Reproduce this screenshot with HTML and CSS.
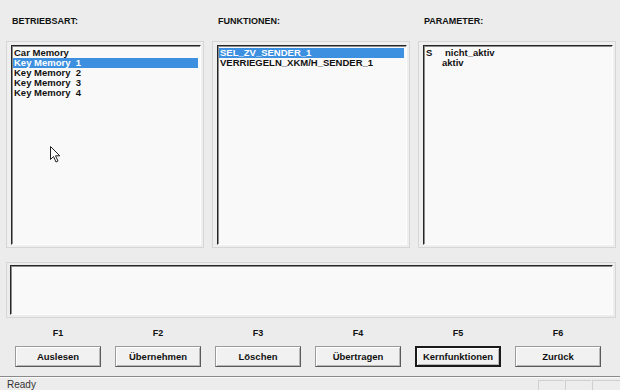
FILE: index.html
```html
<!DOCTYPE html>
<html lang="de">
<head>
    <meta charset="UTF-8">
    <title>Betriebsart</title>
    <link rel="stylesheet" href="styles.css">
</head>
<body>
    <div class="window">
        <div class="columns">
            <div class="column">
                <div class="caption">BETRIEBSART:</div>
                <div class="panel">
                    <ul class="listbox">
                        <li>Car Memory</li>
                        <li class="selected">Key Memory  1</li>
                        <li>Key Memory  2</li>
                        <li>Key Memory  3</li>
                        <li>Key Memory  4</li>
                    </ul>
                </div>
            </div>
            <div class="column">
                <div class="caption">FUNKTIONEN:</div>
                <div class="panel">
                    <ul class="listbox">
                        <li class="selected">SEL_ZV_SENDER_1</li>
                        <li>VERRIEGELN_XKM/H_SENDER_1</li>
                    </ul>
                </div>
            </div>
            <div class="column">
                <div class="caption">PARAMETER:</div>
                <div class="panel">
                    <ul class="listbox params">
                        <li><span class="flag">S</span>nicht_aktiv</li>
                        <li><span class="flag"></span>aktiv</li>
                    </ul>
                </div>
            </div>
        </div>

        <div class="message">
            <div class="message-box"></div>
        </div>

        <div class="keys">
            <div class="key"><span>F1</span><button>Auslesen</button></div>
            <div class="key"><span>F2</span><button>Übernehmen</button></div>
            <div class="key"><span>F3</span><button>Löschen</button></div>
            <div class="key"><span>F4</span><button>Übertragen</button></div>
            <div class="key"><span>F5</span><button class="default">Kernfunktionen</button></div>
            <div class="key"><span>F6</span><button>Zurück</button></div>
        </div>

        <div class="statusbar">
            <div class="status-text">Ready</div>
            <div class="pane"></div>
            <div class="pane"></div>
            <div class="pane"></div>
        </div>

        <!-- Mauszeiger -->
        <svg class="cursor" width="11" height="17" viewBox="0 0 11 17">
            <path d="M0.5 0.5 L0.5 13.5 L3.5 10.5 L6 16 L8 15 L5.5 9.8 L9.8 9.8 Z" fill="#fff" stroke="#222" stroke-width="1"/>
        </svg>
    </div>
</body>
</html>
```

FILE: styles.css
```css
body {
    margin: 0;
    background-color: #ececec;
    font-family: "Liberation Sans", Arial, sans-serif;
    color: #111;
}
.window {
    position: relative;
    width: 620px;
    height: 390px;
    overflow: hidden;
}
.columns {
    display: grid;
    grid-template-columns: 198px 198px 198px;
    column-gap: 8px;
    padding: 16px 0 0 6px;
}
.caption {
    height: 11px;
    line-height: 11px;
    font-size: 9px;
    font-weight: bold;
    padding-left: 6px;
    margin-bottom: 14px;
}
.panel {
    height: 207px;
    box-sizing: border-box;
    border: 1px solid #d6d6d6;
    background-color: #efefef;
    padding: 3px 2px 2px 4px;
}
.listbox {
    list-style: none;
    margin: 0;
    height: 100%;
    box-sizing: border-box;
    padding: 2px 2px 0 1px;
    background-color: #f9f9f9;
    border-top: 1px solid #262626;
    border-left: 1px solid #262626;
    border-right: 1px solid #fdfdfd;
    border-bottom: 1px solid #fdfdfd;
    box-shadow: inset 1px 1px 0 #8c8c8c;
}
.listbox li {
    height: 10px;
    line-height: 10px;
    font-size: 9.5px;
    font-weight: bold;
    padding-left: 1px;
    white-space: pre;
}
.listbox li.selected {
    background-color: #3d8fe0;
    color: #fff;
}
.params .flag {
    display: inline-block;
    width: 19px;
}
.params li:nth-child(2) .flag {
    width: 16px;
}
.message {
    margin: 14px 4px 0 6px;
    height: 56px;
    box-sizing: border-box;
    border: 1px solid #d6d6d6;
    padding: 2px 2px 2px 3px;
}
.message-box {
    height: 100%;
    box-sizing: border-box;
    background-color: #f9f9f9;
    border-top: 1px solid #262626;
    border-left: 1px solid #262626;
    border-right: 1px solid #fdfdfd;
    border-bottom: 1px solid #fdfdfd;
    box-shadow: inset 1px 1px 0 #8c8c8c;
}
.keys {
    display: grid;
    grid-template-columns: repeat(6, 100px);
    padding-left: 8px;
    margin-top: 10px;
}
.key {
    display: flex;
    flex-direction: column;
    align-items: center;
}
.key span {
    height: 11px;
    line-height: 11px;
    font-size: 9px;
    font-weight: bold;
    margin-bottom: 7px;
}
.key button {
    width: 86px;
    height: 21px;
    padding: 0;
    font-family: "Liberation Sans", Arial, sans-serif;
    font-size: 9.5px;
    font-weight: bold;
    color: #111;
    background-color: #f1f1f1;
    border: 1px solid #5a5a5a;
    border-top-color: #9a9a9a;
    border-left-color: #9a9a9a;
    box-shadow: inset 1px 1px 0 #fff, inset -1px -1px 0 #b8b8b8;
}
.key button.default {
    border: 2px solid #1a1a1a;
}
.statusbar {
    display: flex;
    margin-top: 9px;
    border-top: 1px solid #8a8a8a;
    height: 14px;
    box-shadow: inset 0 1px 0 #fafafa;
}
.status-text {
    flex: 1;
    padding: 2px 0 0 7px;
    font-size: 10px;
    line-height: 11px;
    color: #333;
}
.pane {
    width: 25px;
    margin-top: 3px;
    margin-right: 1px;
    border-top: 1px solid #d0d0d0;
    border-left: 1px solid #d0d0d0;
    background-color: #ededed;
}
.pane:last-child {
    width: 27px;
    margin-right: 0;
}
.cursor {
    position: absolute;
    left: 50px;
    top: 146px;
}
```
